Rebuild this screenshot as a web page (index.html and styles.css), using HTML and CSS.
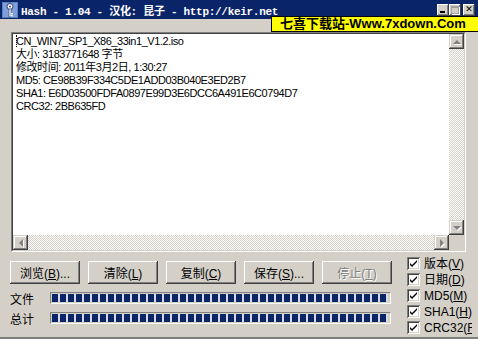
FILE: index.html
```html
<!DOCTYPE html>
<html lang="zh-CN">
<head>
    <meta charset="UTF-8">
    <title>Hash - 1.04</title>
    <link rel="stylesheet" href="styles.css">
</head>
<body>
<div class="window">
    <div class="titlebar">
        <svg class="app-icon" width="16" height="16" viewBox="0 0 16 16">
            <rect x="0" y="0" width="16" height="16" fill="#5a7fc0"/>
            <rect x="1" y="1" width="14" height="14" fill="#7f9fd8"/>
            <circle cx="8" cy="4.5" r="3" fill="#fff" stroke="#2a3a70" stroke-width="1"/>
            <circle cx="8" cy="4.5" r="1" fill="#2a3a70"/>
            <rect x="7" y="7" width="2" height="8" fill="#fff" stroke="#2a3a70" stroke-width="0.6"/>
            <rect x="9" y="11" width="2" height="1.5" fill="#fff"/>
            <rect x="9" y="13" width="1.5" height="1.5" fill="#fff"/>
        </svg>
        <span class="title">Hash - 1.04 - 汉化: 昆子 - http://keir.net</span>
        <div class="caption-buttons">
            <span class="cap-btn min"><i></i></span>
            <span class="cap-btn max"><i></i></span>
            <span class="cap-btn close">✕</span>
        </div>
    </div>

    <div class="banner">七喜下载站-Www.7xdown.Com</div>

    <div class="client">
        <div class="output">
            <div class="output-text">
                <div><span class="caret"></span>CN_WIN7_SP1_X86_33in1_V1.2.iso</div>
                <div>大小: 3183771648 字节</div>
                <div>修改时间: 2011年3月2日, 1:30:27</div>
                <div>MD5: CE98B39F334C5DE1ADD03B040E3ED2B7</div>
                <div>SHA1: E6D03500FDFA0897E99D3E6DCC6A491E6C0794D7</div>
                <div>CRC32: 2BB635FD</div>
            </div>
            <div class="vscroll">
                <span class="sb-btn"><i class="arrow up"></i></span>
                <span class="track"></span>
                <span class="sb-btn"><i class="arrow down"></i></span>
            </div>
            <div class="hscroll">
                <span class="sb-btn"><i class="arrow left"></i></span>
                <span class="track"></span>
                <span class="sb-btn"><i class="arrow right"></i></span>
            </div>
            <div class="corner"></div>
        </div>

        <div class="controls">
            <div class="main-controls">
                <div class="buttons">
                    <button>浏览(<u>B</u>)...</button>
                    <button>清除(<u>L</u>)</button>
                    <button>复制(<u>C</u>)</button>
                    <button>保存(<u>S</u>)...</button>
                    <button class="disabled">停止(<u>T</u>)</button>
                </div>
                <div class="progress-row">
                    <span class="label">文件</span>
                    <div class="bar"><div class="fill"></div></div>
                </div>
                <div class="progress-row">
                    <span class="label">总计</span>
                    <div class="bar"><div class="fill"></div></div>
                </div>
            </div>
            <div class="checks">
                <label><span class="box"><svg width="9" height="9" viewBox="0 0 9 9"><path d="M1 4 L3 6 L8 1 L8 3 L3 8 L1 6 Z" fill="#000"/></svg></span>版本(<u>V</u>)</label>
                <label><span class="box"><svg width="9" height="9" viewBox="0 0 9 9"><path d="M1 4 L3 6 L8 1 L8 3 L3 8 L1 6 Z" fill="#000"/></svg></span>日期(<u>D</u>)</label>
                <label><span class="box"><svg width="9" height="9" viewBox="0 0 9 9"><path d="M1 4 L3 6 L8 1 L8 3 L3 8 L1 6 Z" fill="#000"/></svg></span>MD5(<u>M</u>)</label>
                <label><span class="box"><svg width="9" height="9" viewBox="0 0 9 9"><path d="M1 4 L3 6 L8 1 L8 3 L3 8 L1 6 Z" fill="#000"/></svg></span>SHA1(<u>H</u>)</label>
                <label><span class="box"><svg width="9" height="9" viewBox="0 0 9 9"><path d="M1 4 L3 6 L8 1 L8 3 L3 8 L1 6 Z" fill="#000"/></svg></span>CRC32(<u>R</u>)</label>
            </div>
        </div>
    </div>
</div>
</body>
</html>
```

FILE: styles.css
```css
body {
    margin: 0;
    width: 478px;
    height: 339px;
    overflow: hidden;
    background: #d4d0c8;
    font-family: "Liberation Sans", "Noto Sans CJK SC", sans-serif;
    font-size: 11px;
    color: #000;
}
.window {
    position: relative;
    width: 478px;
    height: 339px;
    display: flex;
    flex-direction: column;
    box-sizing: border-box;
    border-bottom: 2px solid #808080;
}
.titlebar {
    height: 19px;
    flex: none;
    background: #0a246a;
    display: flex;
    align-items: center;
    padding-left: 2px;
}
.app-icon {
    flex: none;
}
.title {
    margin-left: 3px;
    color: #fff;
    font-family: "Liberation Mono", "Noto Sans CJK SC", monospace;
    font-weight: bold;
    font-size: 11px;
    letter-spacing: -0.3px;
    white-space: nowrap;
}
.caption-buttons {
    margin-left: auto;
    display: flex;
    margin-right: 3px;
}
.cap-btn {
    width: 12px;
    height: 12px;
    box-sizing: border-box;
    background: #d4d0c8;
    box-shadow: inset -1px -1px #404040, inset 1px 1px #fff, inset -2px -2px #808080;
    position: relative;
    display: flex;
    align-items: center;
    justify-content: center;
}
.cap-btn.close {
    margin-left: 2px;
    font-size: 9px;
    font-weight: bold;
    font-family: "DejaVu Sans", sans-serif;
    line-height: 1;
}
.cap-btn.min i {
    position: absolute;
    left: 3px;
    bottom: 3px;
    width: 5px;
    height: 2px;
    background: #000;
}
.cap-btn.max i {
    width: 6px;
    height: 5px;
    border: 1px solid #a0a0a0;
    border-top-width: 2px;
    box-shadow: 1px 1px #fff;
}
/* floating ad banner over the window */
.banner {
    position: absolute;
    left: 271px;
    top: 16px;
    width: 203px;
    height: 14px;
    background: #ffff00;
    border: 1px solid #000;
    font-weight: bold;
    font-size: 13px;
    line-height: 14px;
    padding-left: 8px;
    box-sizing: content-box;
    white-space: nowrap;
    overflow: hidden;
    z-index: 2;
}
.client {
    flex: 1;
    display: flex;
    flex-direction: column;
    padding: 13px 0 0 10px;
}
.output {
    margin-left: 1px;
    width: 455px;
    height: 220px;
    box-sizing: border-box;
    border: 2px solid;
    border-color: #808080 #fff #fff #808080;
    background: #fff;
    display: grid;
    grid-template-columns: 1fr 15px;
    grid-template-rows: 1fr 15px;
    position: relative;
}
.output::before {
    content: '';
    position: absolute;
    inset: -1px;
    border: 1px solid;
    border-color: #404040 #d4d0c8 #d4d0c8 #404040;
    pointer-events: none;
}
.output-text {
    padding: 1px 0 0 3px;
    line-height: 13px;
    font-size: 11px;
    letter-spacing: -0.45px;
    white-space: nowrap;
    overflow: hidden;
}
.caret {
    display: inline-block;
    width: 0;
    height: 12px;
    vertical-align: -2px;
    border-left: 1px dotted #000;
    margin-right: -1px;
}
.vscroll, .hscroll {
    display: flex;
    background: repeating-conic-gradient(#fff 0 25%, #d4d0c8 0 50%) 0 0 / 2px 2px;
}
.vscroll {
    flex-direction: column;
}
.track {
    flex: 1;
}
.sb-btn {
    width: 15px;
    height: 15px;
    flex: none;
    box-sizing: border-box;
    background: #d4d0c8;
    box-shadow: inset -1px -1px #404040, inset 1px 1px #d4d0c8, inset -2px -2px #808080, inset 2px 2px #fff;
    display: flex;
    align-items: center;
    justify-content: center;
}
.arrow {
    width: 0;
    height: 0;
    border: 4px solid transparent;
    filter: drop-shadow(1px 1px 0 #fff);
}
.arrow.up {
    border-bottom-color: #808080;
    border-top-width: 0;
}
.arrow.down {
    border-top-color: #808080;
    border-bottom-width: 0;
}
.arrow.left {
    border-right-color: #808080;
    border-left-width: 0;
}
.arrow.right {
    border-left-color: #808080;
    border-right-width: 0;
}
.corner {
    background: #d4d0c8;
}
.controls {
    display: flex;
    margin-top: 5px;
}
.main-controls {
    display: flex;
    flex-direction: column;
    padding-top: 4px;
}
.buttons {
    display: flex;
    gap: 8px;
}
button {
    width: 70px;
    height: 23px;
    padding: 0;
    border: none;
    background: #d4d0c8;
    box-shadow: inset -1px -1px #404040, inset 1px 1px #fff, inset -2px -2px #808080, inset 2px 2px #d4d0c8;
    font-family: "Liberation Sans", "Noto Sans CJK SC", sans-serif;
    font-size: 12px;
    color: #000;
}
button.disabled {
    color: #808080;
    text-shadow: 1px 1px #fff;
}
.progress-row {
    display: flex;
    align-items: center;
    height: 12px;
    margin-top: 8px;
}
.progress-row:first-of-type {
    margin-top: 9px;
}
.label {
    width: 40px;
    font-size: 12px;
}
.bar {
    width: 341px;
    height: 12px;
    box-sizing: border-box;
    border: 1px solid;
    border-color: #808080 #fff #fff #808080;
    padding: 1px 2px 1px 1px;
}
.fill {
    height: 100%;
    background: repeating-linear-gradient(90deg, #0a246a 0 6px, #d8dae4 6px 8px);
}
.checks {
    margin-left: 14px;
    width: 66px;
    overflow: hidden;
    display: flex;
    flex-direction: column;
}
.checks label {
    height: 16px;
    display: flex;
    align-items: flex-start;
    white-space: nowrap;
    font-size: 12px;
    line-height: 14px;
}
.box {
    width: 13px;
    height: 13px;
    flex: none;
    box-sizing: border-box;
    background: #fff;
    box-shadow: inset 1px 1px #808080, inset -1px -1px #fff, inset 2px 2px #404040, inset -2px -2px #d4d0c8;
    display: flex;
    align-items: center;
    justify-content: center;
    margin: 0 4px 0 1px;
}
```
